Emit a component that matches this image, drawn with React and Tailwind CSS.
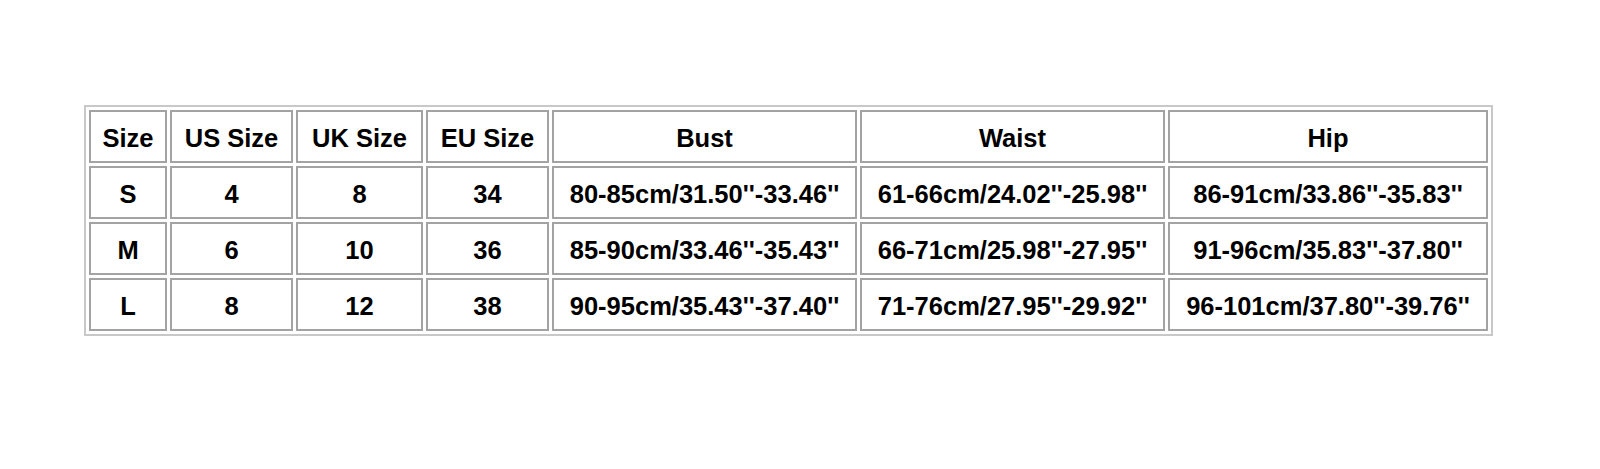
import React from "react";

const widths = [78, 123, 127, 123, 305, 305, 320];
const header = ["Size", "US Size", "UK Size", "EU Size", "Bust", "Waist", "Hip"];
const rows = [
  ["S", "4", "8", "34", "80-85cm/31.50''-33.46''", "61-66cm/24.02''-25.98''", "86-91cm/33.86''-35.83''"],
  ["M", "6", "10", "36", "85-90cm/33.46''-35.43''", "66-71cm/25.98''-27.95''", "91-96cm/35.83''-37.80''"],
  ["L", "8", "12", "38", "90-95cm/35.43''-37.40''", "71-76cm/27.95''-29.92''", "96-101cm/37.80''-39.76''"],
];

function Cell({ children, w }) {
  return (
    <td className="border-2 border-[#a3a3a3] p-0 text-center align-middle text-[25.5px] font-bold text-black leading-none whitespace-nowrap">
      <div className="h-[49px] flex items-center justify-center pt-[4px]" style={{ width: w - 4 }}>
        {children}
      </div>
    </td>
  );
}

export default function App() {
  return (
    <div className="w-[1600px] h-[469px] bg-white overflow-hidden pt-[105px] pl-[84px]" style={{ fontFamily: '"Liberation Sans", Arial, sans-serif' }}>
      <table className="border-2 border-[#c8c8c8] border-separate border-spacing-[3px]">
        <tbody>
          <tr>
            {header.map((h, i) => (
              <Cell key={i} w={widths[i]}>{h}</Cell>
            ))}
          </tr>
          {rows.map((r, ri) => (
            <tr key={ri}>
              {r.map((c, i) => (
                <Cell key={i} w={widths[i]}>{c}</Cell>
              ))}
            </tr>
          ))}
        </tbody>
      </table>
    </div>
  );
}
